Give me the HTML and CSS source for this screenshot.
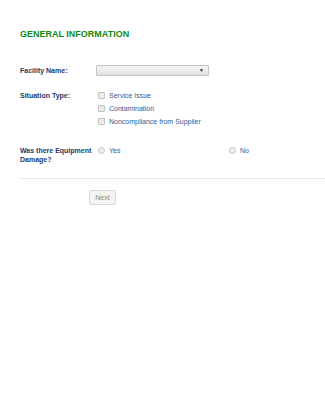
FILE: index.html
```html
<!DOCTYPE html>
<html lang="en">
<head>
    <meta charset="UTF-8">
    <meta name="viewport" content="width=device-width, initial-scale=1.0">
    <title>General Information</title>
    <link rel="stylesheet" href="styles.css">
</head>
<body>
    <form class="form">
        <h2 class="form-title">GENERAL INFORMATION</h2>

        <div class="row row-facility">
            <label class="row-label">Facility Name:</label>
            <div class="select">
                <span class="select-arrow">&#9660;</span>
            </div>
        </div>

        <div class="row row-situation">
            <label class="row-label">Situation Type:</label>
            <div class="options">
                <div class="option"><span class="check"></span>Service Issue</div>
                <div class="option"><span class="check"></span>Contamination</div>
                <div class="option"><span class="check"></span>Noncompliance from Supplier</div>
            </div>
        </div>

        <div class="row row-damage">
            <label class="row-label">Was there Equipment Damage?</label>
            <div class="radios">
                <div class="option"><span class="radio"></span>Yes</div>
                <div class="option"><span class="radio"></span>No</div>
            </div>
        </div>

        <hr class="divider">

        <div class="actions">
            <button type="button" class="next-button">Next</button>
        </div>
    </form>
</body>
</html>
```

FILE: styles.css
```css
body {
    margin: 0;
    padding: 0;
    background-color: #fff;
    font-family: "Liberation Sans", Arial, sans-serif;
}
.form {
    padding-top: 29px;
}
.form-title {
    margin: 0 0 26px 20px;
    font-size: 9px;
    line-height: 10px;
    font-weight: bold;
    color: #118a11;
}
.row {
    display: grid;
    grid-template-columns: 76px 1fr;
    padding-left: 20px;
}
.row-label {
    font-size: 7px;
    line-height: 9px;
    font-weight: bold;
    color: #1d3b66;
}
.row-facility {
    align-items: center;
}
.row-situation {
    margin-top: 13px;
}
.row-situation .row-label {
    padding-top: 2px;
}
.row-damage {
    margin-top: 18px;
}
.select {
    position: relative;
    width: 111px;
    height: 9px;
    border: 1px solid #c4c4c4;
    border-radius: 1px;
    background: linear-gradient(#f4f4f4, #e2e2e2);
}
.select-arrow {
    position: absolute;
    right: 4px;
    top: 1px;
    font-size: 5px;
    line-height: 7px;
    color: #1b2b1b;
}
.options {
    display: flex;
    flex-direction: column;
}
.option {
    display: flex;
    align-items: center;
    height: 13px;
    padding-left: 2px;
    font-size: 7px;
    color: #2f5b94;
}
.row-damage .option {
    height: 9px;
}
.check {
    width: 5px;
    height: 5px;
    margin-right: 4px;
    border: 1px solid #c2c2c2;
    border-radius: 1px;
    background-color: #ececec;
}
.radios {
    display: grid;
    grid-template-columns: 131px 1fr;
}
.radio {
    width: 5px;
    height: 5px;
    margin-right: 4px;
    border: 1px solid #c2c2c2;
    border-radius: 50%;
    background-color: #efefef;
}
.divider {
    margin: 14px 0 11px 18px;
    border: 0;
    border-top: 1px solid #e8e8e8;
}
.actions {
    display: flex;
    padding-left: 89px;
}
.next-button {
    width: 27px;
    height: 15px;
    padding: 0;
    border: 1px solid #d6d6d6;
    border-radius: 2px;
    background-color: #f3f3f3;
    font-family: "Liberation Sans", Arial, sans-serif;
    font-size: 7px;
    color: #8a8a8a;
}
```
